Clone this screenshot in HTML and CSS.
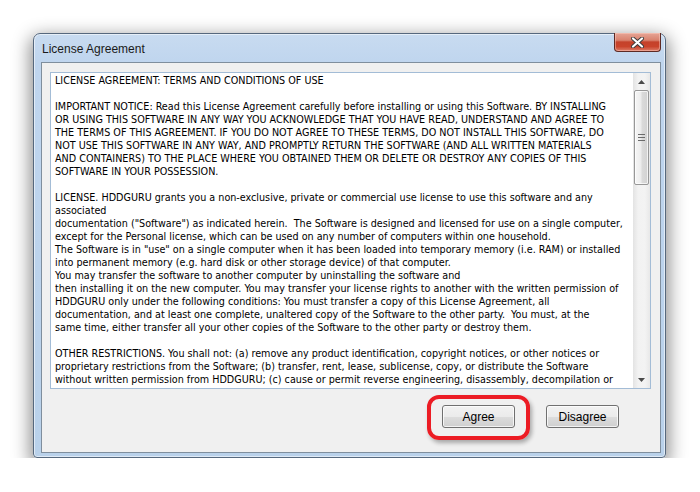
FILE: index.html
```html
<!DOCTYPE html>
<html>
<head>
<meta charset="utf-8">
<link rel="stylesheet" href="styles.css">
</head>
<body>
<div class="window">
  <div class="titlebar">
    <span class="title">License Agreement</span>
    <div class="close">
      <svg width="17" height="11" viewBox="0 0 17 11">
        <path d="M4 1.5 L13 9.5 M13 1.5 L4 9.5" stroke="#3b3b3b" stroke-width="4" stroke-linecap="round"/>
        <path d="M4 1.5 L13 9.5 M13 1.5 L4 9.5" stroke="#ffffff" stroke-width="2.2" stroke-linecap="round"/>
      </svg>
    </div>
  </div>
  <div class="client">
    <div class="textbox">
      <div class="text">
        <p>LICENSE AGREEMENT: TERMS AND CONDITIONS OF USE</p>
        <p>IMPORTANT NOTICE: Read this License Agreement carefully before installing or using this Software. BY INSTALLING<br>OR USING THIS SOFTWARE IN ANY WAY YOU ACKNOWLEDGE THAT YOU HAVE READ, UNDERSTAND AND AGREE TO<br>THE TERMS OF THIS AGREEMENT. IF YOU DO NOT AGREE TO THESE TERMS, DO NOT INSTALL THIS SOFTWARE, DO<br>NOT USE THIS SOFTWARE IN ANY WAY, AND PROMPTLY RETURN THE SOFTWARE (AND ALL WRITTEN MATERIALS<br>AND CONTAINERS) TO THE PLACE WHERE YOU OBTAINED THEM OR DELETE OR DESTROY ANY COPIES OF THIS<br>SOFTWARE IN YOUR POSSESSION.</p>
        <p>LICENSE. HDDGURU grants you a non-exclusive, private or commercial use license to use this software and any<br>associated<br>documentation ("Software") as indicated herein.&nbsp; The Software is designed and licensed for use on a single computer,<br>except for the Personal license, which can be used on any number of computers within one household.<br>The Software is in "use" on a single computer when it has been loaded into temporary memory (i.e. RAM) or installed<br>into permanent memory (e.g. hard disk or other storage device) of that computer.<br>You may transfer the software to another computer by uninstalling the software and<br>then installing it on the new computer. You may transfer your license rights to another with the written permission of<br>HDDGURU only under the following conditions: You must transfer a copy of this License Agreement, all<br>documentation, and at least one complete, unaltered copy of the Software to the other party.&nbsp; You must, at the<br>same time, either transfer all your other copies of the Software to the other party or destroy them.</p>
        <p>OTHER RESTRICTIONS. You shall not: (a) remove any product identification, copyright notices, or other notices or<br>proprietary restrictions from the Software; (b) transfer, rent, lease, sublicense, copy, or distribute the Software<br>without written permission from HDDGURU; (c) cause or permit reverse engineering, disassembly, decompilation or</p>
      </div>
      <div class="scrollbar">
        <div class="arrow"><svg width="7" height="4" viewBox="0 0 7 4"><path d="M0 4 L3.5 0 L7 4 Z" fill="#4a4a4a"/></svg></div>
        <div class="thumb">
          <svg width="7" height="7" viewBox="0 0 7 7"><path d="M0 0.5 H7 M0 3.5 H7 M0 6.5 H7" stroke="#6b6b6b" stroke-width="1"/></svg>
        </div>
        <div class="track"></div>
        <div class="arrow"><svg width="7" height="4" viewBox="0 0 7 4"><path d="M0 0 L3.5 4 L7 0 Z" fill="#4a4a4a"/></svg></div>
      </div>
    </div>
    <div class="buttons">
      <div class="btn-wrap">
        <button class="btn">Agree</button>
        <div class="highlight"></div>
      </div>
      <button class="btn">Disagree</button>
    </div>
  </div>
</div>
</body>
</html>
```

FILE: styles.css
```css
html, body {
  margin: 0;
  padding: 0;
  background: #ffffff;
}
body {
  padding: 33px 0 0 33px;
}
.window {
  width: 633px;
  height: 425px;
  box-sizing: border-box;
  border: 1px solid #56687d;
  border-radius: 7px 7px 4px 4px;
  background: linear-gradient(to bottom, #c8dbf0 0px, #bfd5ee 30px, #b9d1ea 100%);
  box-shadow: 0 6px 18px 3px rgba(0, 0, 0, 0.45), inset 0 0 0 1px rgba(255, 255, 255, 0.55);
  padding: 0 4px 4px 7px;
  display: flex;
  flex-direction: column;
}
.titlebar {
  height: 28px;
  display: flex;
  justify-content: space-between;
  align-items: flex-start;
}
.title {
  font-family: "Liberation Sans", Arial, sans-serif;
  font-size: 12px;
  color: #1a1a1a;
  margin: 8px 0 0 1px;
}
.close {
  margin-top: -1px;
  width: 47px;
  height: 19px;
  box-sizing: border-box;
  border: 1px solid #5d2a24;
  border-top: none;
  border-radius: 0 0 4px 4px;
  background: linear-gradient(to bottom, #e6a596 0%, #d9826e 40%, #c4412a 50%, #c9432b 75%, #dc7d68 100%);
  box-shadow: inset 0 0 0 1px rgba(255, 210, 200, 0.45);
  display: flex;
  align-items: center;
  justify-content: center;
}
.close svg {
  display: block;
}
.client {
  flex: 1;
  border: 1px solid #7f8e9d;
  background: #f0f0f0;
  padding: 9px 9px 0 8px;
  display: flex;
  flex-direction: column;
}
.textbox {
  width: 601px;
  height: 317px;
  box-sizing: border-box;
  border: 1px solid #a3bcd6;
  background: #ffffff;
  display: flex;
  overflow: hidden;
}
.text {
  flex: 1;
  overflow: hidden;
  padding: 1px 0 0 4px;
  font-family: "DejaVu Sans Condensed", "DejaVu Sans", sans-serif;
  font-size: 10.7px;
  line-height: 13px;
  color: #000000;
  white-space: nowrap;
}
.text p {
  margin: 0 0 13px 0;
}
.text p:last-child {
  margin-bottom: 0;
}
.scrollbar {
  width: 17px;
  display: flex;
  flex-direction: column;
  background: linear-gradient(to right, #e3e3e3, #f2f2f2 30%, #f3f3f3 70%, #e8e8e8);
}
.arrow {
  height: 17px;
  display: flex;
  align-items: center;
  justify-content: center;
}
.arrow svg {
  display: block;
}
.thumb {
  height: 95px;
  margin: 0 1px;
  box-sizing: border-box;
  border: 1px solid #979797;
  border-radius: 2px;
  background: linear-gradient(to right, #f6f6f6 0%, #ececec 45%, #dadada 55%, #d2d2d2 100%);
  box-shadow: inset 0 0 0 1px rgba(255, 255, 255, 0.7);
  display: flex;
  align-items: center;
  justify-content: center;
}
.thumb svg {
  display: block;
}
.track {
  flex: 1;
}
.buttons {
  margin-top: 16px;
  padding-right: 32px;
  display: flex;
  justify-content: flex-end;
  gap: 31px;
}
.btn-wrap {
  position: relative;
}
.btn {
  width: 73px;
  height: 23px;
  box-sizing: border-box;
  border: 1px solid #707070;
  border-radius: 3px;
  background: linear-gradient(to bottom, #f2f2f2 0%, #ebebeb 50%, #dddddd 51%, #cfcfcf 100%);
  box-shadow: inset 0 0 0 1px rgba(255, 255, 255, 0.75);
  font-family: "Liberation Sans", Arial, sans-serif;
  font-size: 12px;
  color: #000000;
  padding: 0;
  display: block;
}
.highlight {
  position: absolute;
  left: -15px;
  top: -10px;
  width: 103px;
  height: 45px;
  box-sizing: border-box;
  border: 4px solid #ec1c24;
  border-radius: 12px;
  box-shadow: 2px 3px 4px rgba(0, 0, 0, 0.3);
}
```
